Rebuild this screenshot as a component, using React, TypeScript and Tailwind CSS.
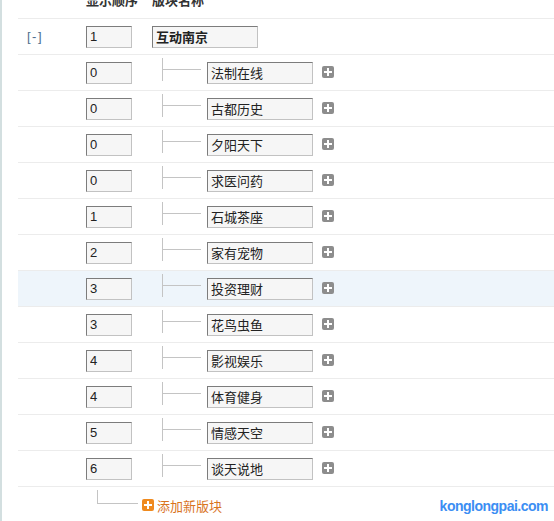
const CJK = "font-['Liberation_Sans','Noto_Sans_CJK_SC',sans-serif]";

interface Board {
  order: string;
  name: string;
  active?: boolean;
}

const boards: Board[] = [
  { order: "0", name: "法制在线" },
  { order: "0", name: "古都历史" },
  { order: "0", name: "夕阳天下" },
  { order: "0", name: "求医问药" },
  { order: "1", name: "石城茶座" },
  { order: "2", name: "家有宠物" },
  { order: "3", name: "投资理财", active: true },
  { order: "3", name: "花鸟虫鱼" },
  { order: "4", name: "影视娱乐" },
  { order: "4", name: "体育健身" },
  { order: "5", name: "情感天空" },
  { order: "6", name: "谈天说地" },
];

const inputCls =
  "h-[22px] border border-t-[#7c7c7c] border-l-[#7c7c7c] border-r-[#c2c2c2] border-b-[#c2c2c2] bg-[#f6f6f6] px-[3px] text-[13px] leading-[20px] text-[#222] outline-none";

function PlusIcon({ color }: { color: string }) {
  return (
    <svg width="12" height="12" viewBox="0 0 12 12" aria-hidden>
      <rect x="0" y="0" width="12" height="12" rx="2" fill={color} />
      <rect x="5" y="2" width="2" height="8" fill="#fff" />
      <rect x="2" y="5" width="8" height="2" fill="#fff" />
    </svg>
  );
}

function ChildRow({ board }: { board: Board }) {
  return (
    <div
      className={`flex h-[36px] items-center border-b border-[#ececec] ${
        board.active ? "bg-[#eef5fb]" : ""
      }`}
    >
      <div className="w-[68px] shrink-0" />
      <input readOnly value={board.order} className={`${inputCls} w-[46px]`} />
      <div className="ml-[30px] mb-[7px] flex h-[23px] w-[45px] items-center border-l border-[#c4c4c4]">
        <div className="h-px w-[38px] bg-[#c4c4c4]" />
      </div>
      <input readOnly value={board.name} className={`${inputCls} w-[106px]`} />
      <div className="ml-[9px] mb-[1px] flex">
        <PlusIcon color="#8d8d8d" />
      </div>
    </div>
  );
}

export default function App() {
  return (
    <div className={`relative h-[521px] w-[554px] overflow-hidden border-l-2 border-[#d3dfe0] bg-white ${CJK}`}>
      <div className="ml-[16px] -mt-[8px]">
        {/* header is scrolled partly out of view, as in the page */}
        <div className="flex h-[27px] border-b border-[#ececec] text-[13px] font-bold leading-[18px] text-[#333]">
          <div className="w-[68px]" />
          <div className="w-[66px]">显示顺序</div>
          <div>版块名称</div>
        </div>

        <div className="flex h-[36px] items-center border-b border-[#ececec]">
          <div className="w-[68px] pl-[9px] text-[13px] tracking-[1.5px] text-[#4d6f8f]">[-]</div>
          <input readOnly value="1" className={`${inputCls} w-[46px]`} />
          <input
            readOnly
            value="互动南京"
            className={`${inputCls} ml-[20px] w-[106px] font-bold`}
          />
        </div>

        {boards.map((b) => (
          <ChildRow key={b.name} board={b} />
        ))}

        <div className="flex items-start">
          <div className="ml-[79px] mt-[3px] h-[14px] w-[41px] border-b border-l border-[#c4c4c4]" />
          <div className="ml-[4px] mt-[12px] flex">
            <PlusIcon color="#ef8a1e" />
          </div>
          <div className="ml-[3px] mt-[11px] text-[13px] leading-[18px] text-[#d9741f]">
            添加新版块
          </div>
        </div>
      </div>

      <div className="absolute bottom-[6px] right-[6px] font-['Liberation_Sans',sans-serif] text-[14px] font-bold leading-[18px] tracking-[-0.5px] text-[#3b8ef3]">
        konglongpai.com
      </div>
    </div>
  );
}
